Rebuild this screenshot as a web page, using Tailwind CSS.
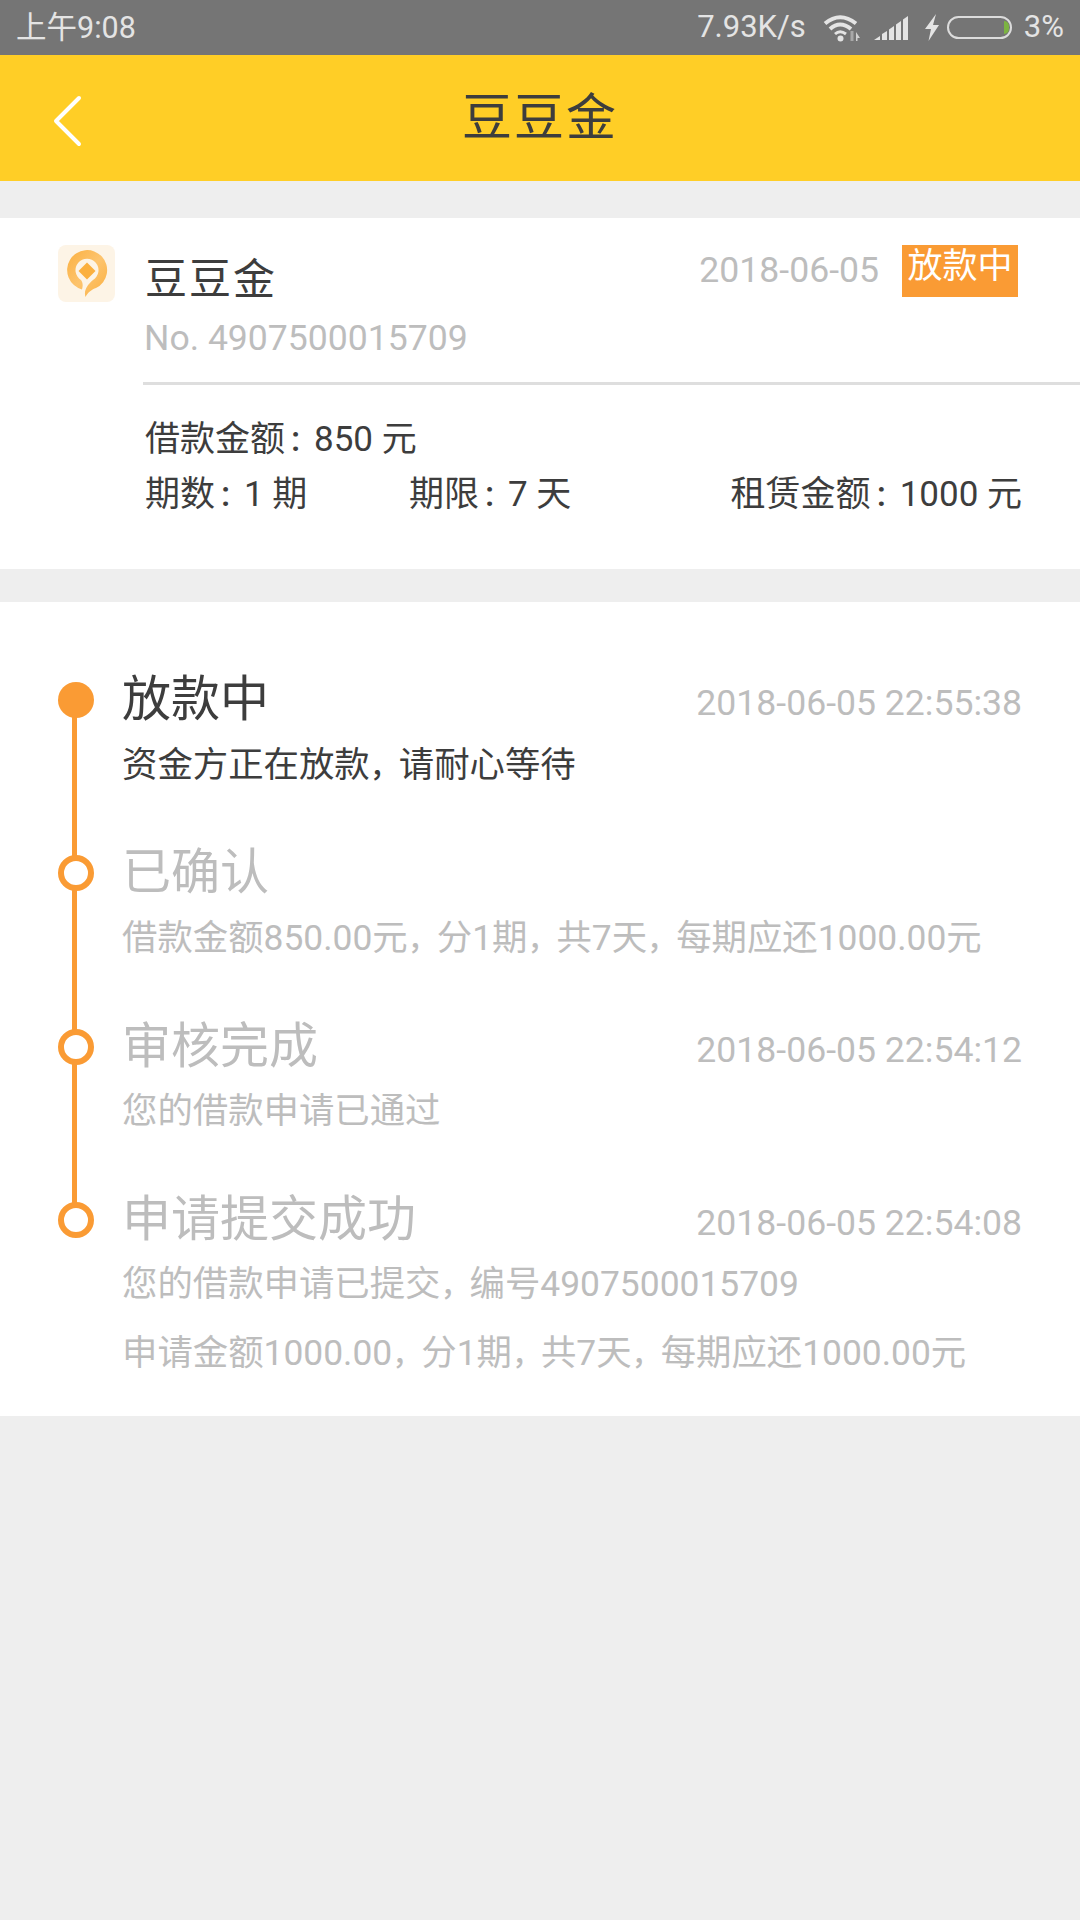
<!DOCTYPE html>
<html>
<head>
<meta charset="utf-8">
<script src="https://cdn.jsdelivr.net/npm/@tailwindcss/browser@4"></script>
</head>
<body class="m-0">
<div class="w-[1080px] h-[1920px] bg-[#eeeeee] overflow-hidden font-['Roboto','Noto_Sans_CJK_SC',sans-serif] text-[#3d3d3d]">
  <!-- status bar -->
  <div class="h-[55px] bg-[#757575] flex items-center justify-between pl-[16px] pr-[16px] text-[#e4e4e4] text-[31px]">
    <span class="text-[30.5px]">上午9:08</span>
    <div class="flex items-center">
      <span class="mr-[17px]">7.93K/s</span>
      <svg class="mr-[13px]" width="38" height="28" viewBox="0 0 38 28" fill="none">
        <path d="M2 9.5 Q17 -3 33 9.5" stroke="#e4e4e4" stroke-width="4"/>
        <path d="M7 15 Q17 6 28 15" stroke="#e4e4e4" stroke-width="4"/>
        <path d="M12 20 Q17 15.5 23 20" stroke="#e4e4e4" stroke-width="3"/>
        <circle cx="17.5" cy="24.5" r="3" fill="#e4e4e4"/>
        <path d="M29 17v10" stroke="#a8a8a8" stroke-width="3"/>
        <path d="M33 18 L37 24 H34.5 V27 H33 Z" fill="#d0d0d0"/>
      </svg>
      <svg class="mr-[17px]" width="34" height="24" viewBox="0 0 34 24" fill="#e4e4e4">
        <path d="M0 24 L6 20 V24Z"/><path d="M8 18 L13 15 V24 H8Z"/><path d="M15 13.5 L20 10 V24 H15Z"/><path d="M22 8.5 L27 5 V24 H22Z"/><path d="M29 3.5 L34 0 V24 H29Z"/>
      </svg>
      <svg class="mr-[8px]" width="14" height="27" viewBox="0 0 14 27" fill="#e4e4e4"><path d="M11 0 L0 15 H6 L3.5 27 L14 11 H8 Z"/></svg>
      <div class="w-[65px] h-[23px] rounded-full border-[2px] border-[#dcdcdc] relative mr-[12px]">
        <div class="absolute right-[1px] top-[3px] w-[5px] h-[13px] rounded-r-full bg-[#7cb342]"></div>
      </div>
      <span>3%</span>
    </div>
  </div>
  <!-- header -->
  <div class="h-[126px] bg-[#ffce26] relative flex items-center justify-center">
    <svg class="absolute left-[52px] top-[39px]" width="32" height="56" viewBox="0 0 32 56" fill="none"><path d="M27 4 L4 27 L27 50" stroke="#fff" stroke-width="4" stroke-linecap="round" stroke-linejoin="round"/></svg>
    <span class="text-[50px] leading-none tracking-[2px] text-[#3d3d3d]">豆豆金</span>
  </div>
  <!-- summary card -->
  <div class="mt-[37px] h-[351px] bg-white relative pl-[145px]">
    <svg class="absolute left-[58px] top-[27px]" width="57" height="57" viewBox="0 0 57 57">
      <defs><linearGradient id="ring" x1="0" y1="0" x2="1" y2="1"><stop offset="0" stop-color="#fbb040"/><stop offset="0.5" stop-color="#fdc46e"/><stop offset="1" stop-color="#fbb040"/></linearGradient></defs>
      <rect width="57" height="57" rx="8" fill="#fdf4e6"/>
      <path d="M24 44.4 A20 20 0 1 1 38 43 C34 44.5 30 47 27.5 52 C25.5 46 29 40 35 35 A11.5 11.5 0 1 0 23 35 C25 37.5 25 41 24 44.4Z" fill="url(#ring)"/>
      <path d="M29 17.5 L37.5 26 L29 34.5 L20.5 26Z" fill="#fbb03f"/>
    </svg>
    <div class="absolute left-[145px] top-[34px] text-[42px] leading-[56px] tracking-[2px]">豆豆金</div>
    <div class="absolute right-[201px] top-[30px] text-[35.6px] leading-[44px] text-[#bdbdbd]">2018-06-05</div>
    <div class="absolute left-[902px] top-[27px] w-[116px] h-[52px] bg-[#fa9b34] text-white text-[35px] leading-[44px] text-center">放款中</div>
    <div class="absolute left-[144px] top-[98px] text-[35.6px] leading-[44px] text-[#bdbdbd]">No. 4907500015709</div>
    <div class="absolute left-[143px] right-0 top-[164px] h-[3px] bg-[#dedede]"></div>
    <div class="absolute left-[145px] top-[200px] text-[35px] leading-[44px]">借款金额<span class="inline-block w-[29px] pl-[6px] font-medium">:</span>850 元</div>
    <div class="absolute left-[145px] top-[255px] text-[35px] leading-[44px]">期数<span class="inline-block w-[29px] pl-[6px] font-medium">:</span>1 期</div>
    <div class="absolute left-[409px] top-[255px] text-[35px] leading-[44px]">期限<span class="inline-block w-[29px] pl-[6px] font-medium">:</span>7 天</div>
    <div class="absolute right-[58px] top-[255px] text-[35px] leading-[44px]">租赁金额<span class="inline-block w-[29px] pl-[6px] font-medium">:</span>1000 元</div>
  </div>
  <!-- timeline card -->
  <div class="mt-[33px] h-[814px] bg-white relative">
    <div class="absolute left-[72px] top-[98px] w-[5px] h-[520px] bg-[#fa9b34]"></div>

    <div class="absolute left-[58px] top-[80px] w-[36px] h-[36px] rounded-full bg-[#fa9b34]"></div>
    <div class="absolute left-[122px] top-[66px] text-[49px] leading-[64px] text-[#3d3d3d]">放款中</div>
    <div class="absolute right-[58px] top-[79px] text-[35.6px] leading-[44px] text-[#bdbdbd]">2018-06-05 22:55:38</div>
    <div class="absolute left-[122px] top-[141px] text-[35.4px] leading-[44px] text-[#3d3d3d]">资金方正在放款<span class="text-[29px] font-medium">，</span>请耐心等待</div>

    <div class="absolute left-[58px] top-[253px] w-[36px] h-[36px] rounded-full bg-white border-[6px] border-[#fa9b34]"></div>
    <div class="absolute left-[122px] top-[239px] text-[49px] leading-[64px] text-[#bdbdbd]">已确认</div>
    <div class="absolute left-[122px] top-[314px] text-[35.4px] leading-[44px] text-[#bdbdbd]">借款金额850.00元<span class="text-[29px] font-medium">，</span>分1期<span class="text-[29px] font-medium">，</span>共7天<span class="text-[29px] font-medium">，</span>每期应还1000.00元</div>

    <div class="absolute left-[58px] top-[427px] w-[36px] h-[36px] rounded-full bg-white border-[6px] border-[#fa9b34]"></div>
    <div class="absolute left-[122px] top-[413px] text-[49px] leading-[64px] text-[#bdbdbd]">审核完成</div>
    <div class="absolute right-[58px] top-[426px] text-[35.6px] leading-[44px] text-[#bdbdbd]">2018-06-05 22:54:12</div>
    <div class="absolute left-[122px] top-[487px] text-[35.4px] leading-[44px] text-[#bdbdbd]">您的借款申请已通过</div>

    <div class="absolute left-[58px] top-[600px] w-[36px] h-[36px] rounded-full bg-white border-[6px] border-[#fa9b34]"></div>
    <div class="absolute left-[122px] top-[586px] text-[49px] leading-[64px] text-[#bdbdbd]">申请提交成功</div>
    <div class="absolute right-[58px] top-[599px] text-[35.6px] leading-[44px] text-[#bdbdbd]">2018-06-05 22:54:08</div>
    <div class="absolute left-[122px] top-[660px] text-[35.4px] leading-[44px] text-[#bdbdbd]">您的借款申请已提交<span class="text-[29px] font-medium">，</span>编号4907500015709</div>
    <div class="absolute left-[122px] top-[729px] text-[35.4px] leading-[44px] text-[#bdbdbd]">申请金额1000.00<span class="text-[29px] font-medium">，</span>分1期<span class="text-[29px] font-medium">，</span>共7天<span class="text-[29px] font-medium">，</span>每期应还1000.00元</div>
  </div>
</div>
</body>
</html>
